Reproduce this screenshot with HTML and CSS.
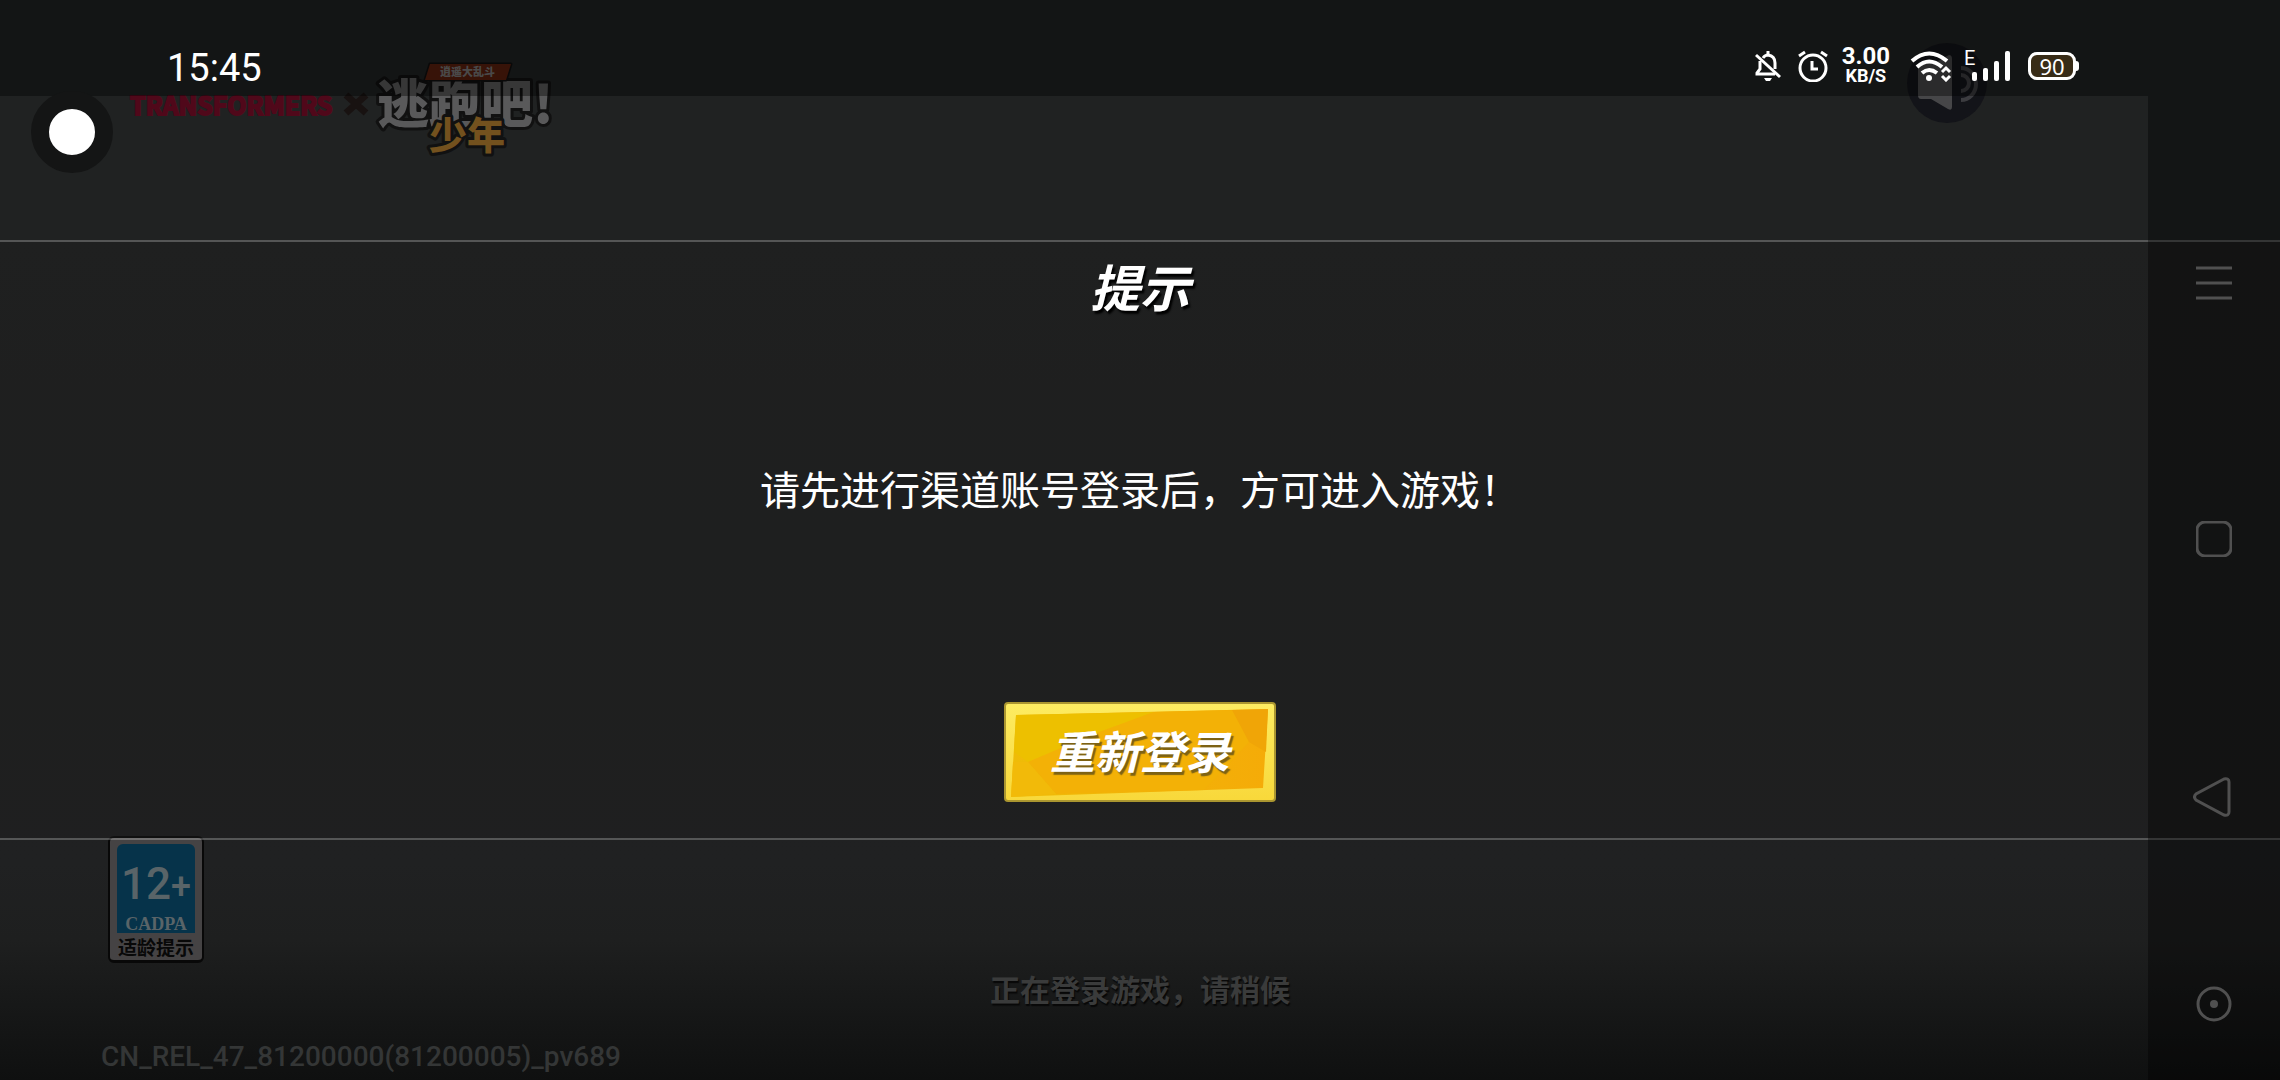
FILE: index.html
```
<!DOCTYPE html>
<html lang="zh-CN">
<head>
    <title>逃跑吧！少年</title>
    <meta charset="UTF-8">
    <link rel="stylesheet" href="styles.css">
</head>
<body>
    <div class="game">
        <!-- 顶部 logo 和声音按钮 -->
        <header class="game-header">
            <span class="brand">TRANSFORMERS</span>
            <svg class="cross" viewBox="0 0 26 26" width="26" height="26">
                <path d="M3 4 L23 22 M23 4 L3 22" stroke="#181211" stroke-width="7"/>
            </svg>
            <svg class="logo" viewBox="0 0 190 100" width="190" height="100">
                <text class="logo-main" x="2" y="61">逃跑吧!</text>
                <polygon points="55,2 136,2 131,18 50,18" fill="#5a1f0e" stroke="#0f0f0f" stroke-width="3"/>
                <text class="logo-tag" x="65" y="14">逍遥大乱斗</text>
                <text class="logo-sub" x="54" y="87">少年</text>
            </svg>
            <button class="sound" aria-label="声音">
                <svg viewBox="0 0 80 80" width="80" height="80">
                    <circle cx="40" cy="40" r="40" fill="#131419"/>
                    <path d="M14 20 H27 L42 12 Q45 12 45 16 V64 Q45 68 41 66 L24 56 H14 Q11 56 11 52 V24 Q11 20 14 20Z" fill="#464648"/>
                    <path d="M54 32 A8 8 0 0 1 54 48" fill="none" stroke="#3c3c40" stroke-width="4"/>
                    <path d="M54 25 A15 16 0 0 1 54 57" fill="none" stroke="#3c3c40" stroke-width="4"/>
                </svg>
            </button>
        </header>

        <!-- 提示弹窗 -->
        <main class="dialog">
            <h1 class="dialog-title">提示</h1>
            <p class="dialog-text">请先进行渠道账号登录后，方可进入游戏！</p>
            <button class="login-btn">
                <svg class="login-bg" viewBox="0 0 272 100" preserveAspectRatio="none">
                    <defs>
                        <linearGradient id="edge" x1="0" y1="0" x2="0" y2="1">
                            <stop offset="0" stop-color="#fdec62"/>
                            <stop offset="1" stop-color="#f8d83a"/>
                        </linearGradient>
                        <linearGradient id="face" x1="0" y1="0" x2="1" y2="0">
                            <stop offset="0" stop-color="#efbc07"/>
                            <stop offset="1" stop-color="#f5ab08"/>
                        </linearGradient>
                    </defs>
                    <rect x="1" y="1" width="270" height="98" rx="3" fill="url(#edge)" stroke="#ab9630" stroke-width="2"/>
                    <polygon points="12,13 264,7 259,86 7,95" fill="url(#face)"/>
                    <polygon points="12,13 150,10 90,32 24,60 10,50" fill="#edc000"/>
                    <polygon points="24,60 90,32 150,10 230,8 245,40 200,88 52,92" fill="#f3b106"/>
                    <polygon points="24,60 52,92 7,95 9,60" fill="#f2ba09"/>
                    <polygon points="228,8 264,7 262,50 245,40" fill="#f0a507"/>
                </svg>
                <span>重新登录</span>
            </button>
        </main>

        <footer class="game-footer">
            <div class="age">
                <div class="age-top">
                    <span class="age-num">12<small>+</small></span>
                    <span class="age-org">CADPA</span>
                </div>
                <span class="age-label">适龄提示</span>
            </div>
            <p class="loading">正在登录游戏，请稍候</p>
            <p class="version">CN_REL_47_81200000(81200005)_pv689</p>
        </footer>
    </div>

    <!-- 系统状态栏 -->
    <div class="status-bar">
        <time class="clock">15:45</time>
        <div class="status-icons">
            <svg viewBox="0 0 26 32" width="26" height="32" fill="none" stroke="#fff" stroke-width="3">
                <path d="M8 8 Q10 5 13 5 Q20 6 20 13 V19"/>
                <path d="M13 1 V5"/>
                <path d="M5 11 V19 L2 23 V24 H20"/>
                <path d="M1 5 L25 27"/>
                <path d="M9 28 H17 L15 31 H11Z" fill="#fff" stroke="none"/>
            </svg>
            <svg class="alarm" viewBox="0 0 30 32" width="30" height="32" fill="none" stroke="#fff" stroke-width="3">
                <circle cx="15" cy="18" r="13"/>
                <path d="M1 6 L7 2 M23 2 L29 6"/>
                <path d="M14 11 V19 H20"/>
            </svg>
            <div class="speed"><b>3.00</b><small>KB/S</small></div>
            <svg class="wifi" viewBox="0 0 42 32" width="42" height="32" fill="none" stroke="#fff" stroke-width="4">
                <path d="M2 11 Q19 -4 37 11"/>
                <path d="M7 17 Q19 6 32 17"/>
                <path d="M12 23 Q19 17 27 23"/>
                <circle cx="19" cy="28" r="3" fill="#fff" stroke="none"/>
                <path d="M32 22 L36 18 L40 22 M32 26 L36 30 L40 26" stroke-width="3"/>
            </svg>
            <div class="signal">
                <span class="signal-type">E</span>
                <svg viewBox="0 0 40 32" width="40" height="32" fill="#fff">
                    <rect x="2" y="22" width="5" height="9" rx="2"/>
                    <rect x="13" y="18" width="5" height="13" rx="2"/>
                    <rect x="24" y="11" width="5" height="20" rx="2"/>
                    <rect x="35" y="1" width="5" height="30" rx="2"/>
                </svg>
            </div>
            <span class="battery">90</span>
        </div>
    </div>

    <!-- 系统导航键 -->
    <nav class="nav-bar">
        <div class="nav-keys">
            <button aria-label="菜单">
                <svg viewBox="0 0 36 36" width="36" height="36"><path d="M0 3 H36 M0 18 H36 M0 33 H36"/></svg>
            </button>
            <button aria-label="最近任务">
                <svg viewBox="0 0 36 36" width="36" height="36"><rect x="1" y="1" width="34" height="34" rx="8"/></svg>
            </button>
            <button aria-label="返回">
                <svg class="back" viewBox="0 0 42 40" width="42" height="40"><path d="M31 2 L3 17 Q0 20 3 23 L31 38 Q36 39 36 35 V5 Q36 1 31 2Z"/></svg>
            </button>
        </div>
        <button class="assist" aria-label="主页">
            <svg viewBox="0 0 36 36" width="36" height="36"><circle cx="18" cy="18" r="16"/><circle class="dot" cx="18" cy="18" r="4"/></svg>
        </button>
    </nav>

    <button class="float-ball" aria-label="悬浮球"></button>
</body>
</html>
```

FILE: styles.css
```
* {
    box-sizing: border-box;
}

body {
    margin: 0;
    position: relative;
    min-height: 100vh;
    overflow: hidden;
    background: #202121;
    color: #fff;
    font-family: Roboto, "Noto Sans CJK SC", sans-serif;
}

h1, p {
    margin: 0;
}

button {
    padding: 0;
    border: none;
    background: none;
    color: inherit;
    font-family: inherit;
    cursor: pointer;
}

svg {
    display: block;
}

.game {
    min-height: 100vh;
    display: grid;
    grid-template-rows: 2fr 5fr 2fr;
    background: linear-gradient(#202222 0%, #202222 22%, #1f2020 50%, #202122 80%, #1e1f1f 87%, #0f1010 100%);
}

/* 顶部 */
.game-header {
    display: flex;
    align-items: flex-start;
    padding: 43px 293px 0 130px;
}

.brand {
    width: 204px;
    margin-top: 45px;
    font-family: "Noto Sans CJK SC", sans-serif;
    font-size: 25px;
    font-weight: bold;
    line-height: 32px;
    color: #50081a;
    -webkit-text-stroke: 2px #50081a;
}

.cross {
    margin: 48px 6px 0 9px;
}

.logo {
    margin-top: 19px;
    font-family: "Noto Sans CJK SC", sans-serif;
    font-weight: 900;
    paint-order: stroke;
    stroke: #111;
    stroke-linejoin: round;
}

.logo-tag {
    font-size: 11px;
    fill: #777;
    stroke: none;
}

.logo-main {
    font-size: 52px;
    fill: #59595a;
    stroke-width: 6px;
}

.logo-sub {
    font-size: 38px;
    fill: #73511e;
    stroke-width: 6px;
}

.sound {
    margin-left: auto;
}

/* 弹窗 */
.dialog {
    position: relative;
    z-index: 1;
    display: flex;
    flex-direction: column;
    align-items: center;
    justify-content: space-between;
    padding: 12px 0 36px;
    border-top: 2px solid rgba(255, 255, 255, 0.24);
    border-bottom: 2px solid rgba(255, 255, 255, 0.24);
    background: rgba(30, 30, 30, 0.4);
    background-clip: padding-box;
}

.dialog-title {
    font-size: 50px;
    font-style: italic;
    font-weight: bold;
    line-height: 72px;
    text-shadow: 2px 3px 2px #000;
}

.dialog-text {
    padding-bottom: 44px;
    font-size: 40px;
    line-height: 60px;
}

.login-btn {
    position: relative;
    width: 272px;
    height: 100px;
    padding-top: 4px;
    font-size: 45px;
    font-style: italic;
    font-weight: bold;
    line-height: 96px;
    text-shadow: 2px 3px 1px #7d6214;
}

.login-bg {
    position: absolute;
    left: 0;
    top: 0;
    width: 100%;
    height: 100%;
}

.login-btn span {
    position: relative;
}

/* 底部 */
.game-footer {
    display: flex;
    flex-direction: column;
    align-items: center;
}

.age {
    align-self: flex-start;
    display: flex;
    flex-direction: column;
    width: 96px;
    height: 127px;
    margin: -4px 0 0 108px;
    padding: 6px 7px 0;
    border: 2px solid #080808;
    border-bottom-width: 3px;
    border-radius: 6px;
    background: #454344;
}

.age-top {
    display: flex;
    flex-direction: column;
    align-items: center;
    height: 89px;
    border-radius: 6px 6px 0 0;
    background: #06334a;
    color: #596468;
}

.age-num {
    margin-top: 15px;
    font-size: 44px;
    font-weight: 500;
    line-height: 50px;
    white-space: nowrap;
}

.age-num small {
    font-size: 36px;
}

.age-org {
    font-family: "Liberation Serif", serif;
    font-size: 18px;
    font-weight: bold;
    line-height: 24px;
}

.age-label {
    color: #080808;
    font-size: 19px;
    font-weight: bold;
    line-height: 32px;
    text-align: center;
    white-space: nowrap;
}

.loading {
    margin-top: 10px;
    color: #3a3b3b;
    font-size: 30px;
    font-weight: bold;
    line-height: 36px;
    text-shadow: 1px 2px 1px #080808;
}

.version {
    align-self: flex-start;
    margin: 32px 0 0 101px;
    color: #343636;
    font-size: 28px;
    font-weight: 500;
    line-height: 32px;
}

/* 状态栏 */
.status-bar {
    position: absolute;
    z-index: 2;
    top: 0;
    left: 0;
    right: 132px;
    height: 96px;
    display: flex;
    align-items: flex-start;
    justify-content: space-between;
    padding: 38px 72px 0 167px;
    background: rgba(0, 0, 0, 0.38);
}

.clock {
    font-size: 38px;
    line-height: 60px;
}

.status-icons {
    display: flex;
    align-items: center;
    height: 56px;
}

.alarm {
    margin-left: 17px;
}

.speed {
    display: flex;
    flex-direction: column;
    align-items: center;
    margin-left: 14px;
}

.speed b {
    font-size: 24px;
    line-height: 20px;
}

.speed small {
    font-size: 18px;
    font-weight: bold;
    line-height: 20px;
}

.wifi {
    margin-left: 20px;
}

.signal {
    position: relative;
    margin-left: 18px;
}

.signal-type {
    position: absolute;
    left: -6px;
    top: -2px;
    font-size: 20px;
    line-height: 20px;
}

.battery {
    position: relative;
    width: 48px;
    height: 28px;
    margin-left: 18px;
    border: 3px solid #fff;
    border-radius: 9px;
    background: #382c17;
    font-family: "Noto Sans", sans-serif;
    font-size: 22px;
    line-height: 22px;
    text-align: center;
}

.battery::after {
    content: "";
    position: absolute;
    right: -6px;
    top: 6px;
    width: 3px;
    height: 10px;
    border-radius: 0 3px 3px 0;
    background: #fff;
}

/* 导航键 */
.nav-bar {
    position: absolute;
    z-index: 2;
    top: 0;
    right: 0;
    bottom: 0;
    width: 132px;
    display: flex;
    flex-direction: column;
    align-items: center;
    justify-content: space-between;
    padding: 265px 0 58px;
    background: rgba(0, 0, 0, 0.38);
}

.nav-bar svg {
    fill: none;
    stroke: #505050;
    stroke-width: 3px;
}

.nav-bar .dot {
    fill: #505050;
    stroke: none;
}

.nav-keys {
    display: flex;
    flex-direction: column;
    align-items: center;
    gap: 220px;
}

/* 悬浮球 */
.float-ball {
    position: absolute;
    z-index: 3;
    top: 91px;
    left: 31px;
    width: 82px;
    height: 82px;
    border: 18px solid #141515;
    border-radius: 50%;
    background: #fff;
}
```
